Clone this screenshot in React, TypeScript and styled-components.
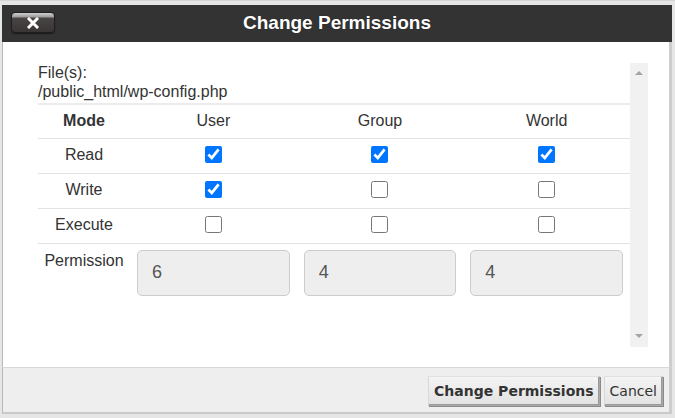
import React from 'react';
import styled, { createGlobalStyle } from 'styled-components';

const GlobalStyle = createGlobalStyle`
  html, body {
    margin: 0;
    padding: 0;
    background: #e6e6e6;
  }
  * {
    box-sizing: border-box;
  }
`;

type Mode = 'read' | 'write' | 'execute';

const rows: { label: string; key: Mode }[] = [
  { label: 'Read', key: 'read' },
  { label: 'Write', key: 'write' },
  { label: 'Execute', key: 'execute' },
];

const perms: Record<string, Record<Mode, boolean>> = {
  user: { read: true, write: true, execute: false },
  group: { read: true, write: false, execute: false },
  world: { read: true, write: false, execute: false },
};

const groups = ['user', 'group', 'world'];

const octal = (p: Record<Mode, boolean>) =>
  (p.read ? 4 : 0) + (p.write ? 2 : 0) + (p.execute ? 1 : 0);

const CloseIcon = () => (
  <svg width="12" height="12" viewBox="0 0 12 12">
    <path
      d="M2 2 L10 10 M10 2 L2 10"
      stroke="#fff"
      strokeWidth="3"
      strokeLinecap="square"
    />
  </svg>
);

const App: React.FC = () => {
  return (
    <>
      <GlobalStyle />
      <StyledPage>
        <Dialog>
          <Header>
            <div>
              <CloseButton type="button" aria-label="close">
                <CloseIcon />
              </CloseButton>
            </div>
            <Title>Change Permissions</Title>
            <div />
          </Header>

          <Body>
            <ScrollBox>
              <Content>
                <FileInfo>
                  File(s):
                  <br />
                  /public_html/wp-config.php
                </FileInfo>
                <PermTable>
                  <colgroup>
                    <col style={{ width: 92 }} />
                    <col />
                    <col />
                    <col />
                  </colgroup>
                  <thead>
                    <tr>
                      <HeadCell $bold>Mode</HeadCell>
                      <HeadCell>User</HeadCell>
                      <HeadCell>Group</HeadCell>
                      <HeadCell>World</HeadCell>
                    </tr>
                  </thead>
                  <tbody>
                    {rows.map((row) => (
                      <tr key={row.key}>
                        <Cell>{row.label}</Cell>
                        {groups.map((g) => (
                          <Cell key={g}>
                            <Check
                              type="checkbox"
                              defaultChecked={perms[g][row.key]}
                            />
                          </Cell>
                        ))}
                      </tr>
                    ))}
                    <tr>
                      <LabelCell>Permission</LabelCell>
                      {groups.map((g) => (
                        <InputCell key={g}>
                          <OctalInput readOnly value={octal(perms[g])} />
                        </InputCell>
                      ))}
                    </tr>
                  </tbody>
                </PermTable>
              </Content>
              <ScrollTrack>
                <Arrow $up />
                <Arrow />
              </ScrollTrack>
            </ScrollBox>
          </Body>

          <Footer>
            <FooterButton type="button" $primary>
              Change Permissions
            </FooterButton>
            <FooterButton type="button">Cancel</FooterButton>
          </Footer>
        </Dialog>
      </StyledPage>
    </>
  );
};

export default App;

const StyledPage = styled.div`
  width: 675px;
  height: 418px;
  padding: 4px 3px 4px 2px;
  display: flex;
  background: #e6e6e6;
  border-top: 1px solid #d4d4d4;
  font-family: 'Liberation Sans', Arial, sans-serif;
  color: #333;
`;

const Dialog = styled.div`
  width: 670px;
  display: flex;
  flex-direction: column;
`;

const Header = styled.div`
  height: 37px;
  background: #333333;
  display: grid;
  grid-template-columns: 1fr auto 1fr;
  align-items: center;
  padding: 0 9px;
`;

const CloseButton = styled.button`
  width: 44px;
  height: 21px;
  margin-top: -2px;
  padding: 0;
  border: 1px solid #1e1e1e;
  border-radius: 4px;
  background: linear-gradient(
    to bottom,
    #cfcfcf 0px,
    #9c9c9c 4px,
    #4a4545 5px,
    #3a3535 100%
  );
  box-shadow: 0 1px 1px rgba(0, 0, 0, 0.5);
  display: flex;
  align-items: center;
  justify-content: center;
  padding-top: 2px;
`;

const Title = styled.div`
  color: #fff;
  font-weight: bold;
  font-size: 19px;
  text-shadow: 0 0 1px rgba(0, 0, 0, 0.6);
  margin-top: -1px;
`;

const Body = styled.div`
  height: 326px;
  background: #fff;
  border-left: 1px solid #b8b8b8;
  border-right: 3px solid #cdcdcd;
  padding: 21px 21px 20px 22px;
`;

const ScrollBox = styled.div`
  height: 100%;
  display: flex;
`;

const Content = styled.div`
  flex: 1;
  padding-left: 13px;
`;

const FileInfo = styled.div`
  font-size: 16px;
  line-height: 19px;
  margin-bottom: 2px;
`;

const PermTable = styled.table`
  width: 100%;
  border-collapse: collapse;
  table-layout: fixed;
  font-size: 16px;
  line-height: 18px;
  border-top: 2px solid #ececec;
`;

const HeadCell = styled.th<{ $bold?: boolean }>`
  font-weight: ${({ $bold }) => ($bold ? 'bold' : 'normal')};
  padding: 7px 0 8px;
  text-align: center;
  border-bottom: 1px solid #e3e3e3;
`;

const Cell = styled.td`
  padding: 7px 0 9px;
  text-align: center;
  vertical-align: middle;
  border-top: 1px solid #e3e3e3;
  height: 35px;
`;

const LabelCell = styled.td`
  padding: 8px 0;
  text-align: center;
  vertical-align: top;
  border-top: 1px solid #e3e3e3;
`;

const InputCell = styled.td`
  padding: 6px 7px;
  vertical-align: top;
  border-top: 1px solid #e3e3e3;
`;

const Check = styled.input`
  width: 17px;
  height: 17px;
  display: block;
  margin: 0 auto;
  accent-color: #0075ff;
`;

const OctalInput = styled.input`
  display: block;
  width: 100%;
  height: 46px;
  background: #eeeeee;
  border: 1px solid #cccccc;
  border-radius: 5px;
  padding: 0 14px;
  font-family: 'Liberation Sans', Arial, sans-serif;
  font-size: 18px;
  color: #555;
  outline: none;
`;

const ScrollTrack = styled.div`
  width: 18px;
  background: #f1f1f1;
  display: flex;
  flex-direction: column;
  justify-content: space-between;
  align-items: center;
  padding: 8px 0 9px;
`;

const Arrow = styled.div<{ $up?: boolean }>`
  width: 0;
  height: 0;
  border-left: 4px solid transparent;
  border-right: 4px solid transparent;
  ${({ $up }) =>
    $up ? 'border-bottom: 4px solid #a3a3a3;' : 'border-top: 4px solid #a3a3a3;'}
`;

const Footer = styled.div`
  height: 47px;
  background: #eeeeee;
  border-top: 1px solid #d8d8d8;
  border-left: 1px solid #b8b8b8;
  border-right: 3px solid #cdcdcd;
  border-bottom: 2px solid #c9c9c9;
  display: flex;
  justify-content: flex-end;
  align-items: flex-start;
  gap: 4px;
  padding: 8px 6px 0 0;
`;

const FooterButton = styled.button<{ $primary?: boolean }>`
  height: 30px;
  padding: 0 5px 1px;
  font-family: 'DejaVu Sans', Verdana, sans-serif;
  font-size: 14px;
  font-weight: ${({ $primary }) => ($primary ? 'bold' : 'normal')};
  color: #333;
  background: linear-gradient(to bottom, #f4f4f4, #e2e2e2);
  border: 1px solid #a8a8a8;
  border-top-color: #e0e0e0;
  border-left-color: #d8d8d8;
  box-shadow: inset -1px -1px 0 #9a9a9a, 1px 1px 0 #8a8a8a;
  border-radius: 0;
`;
